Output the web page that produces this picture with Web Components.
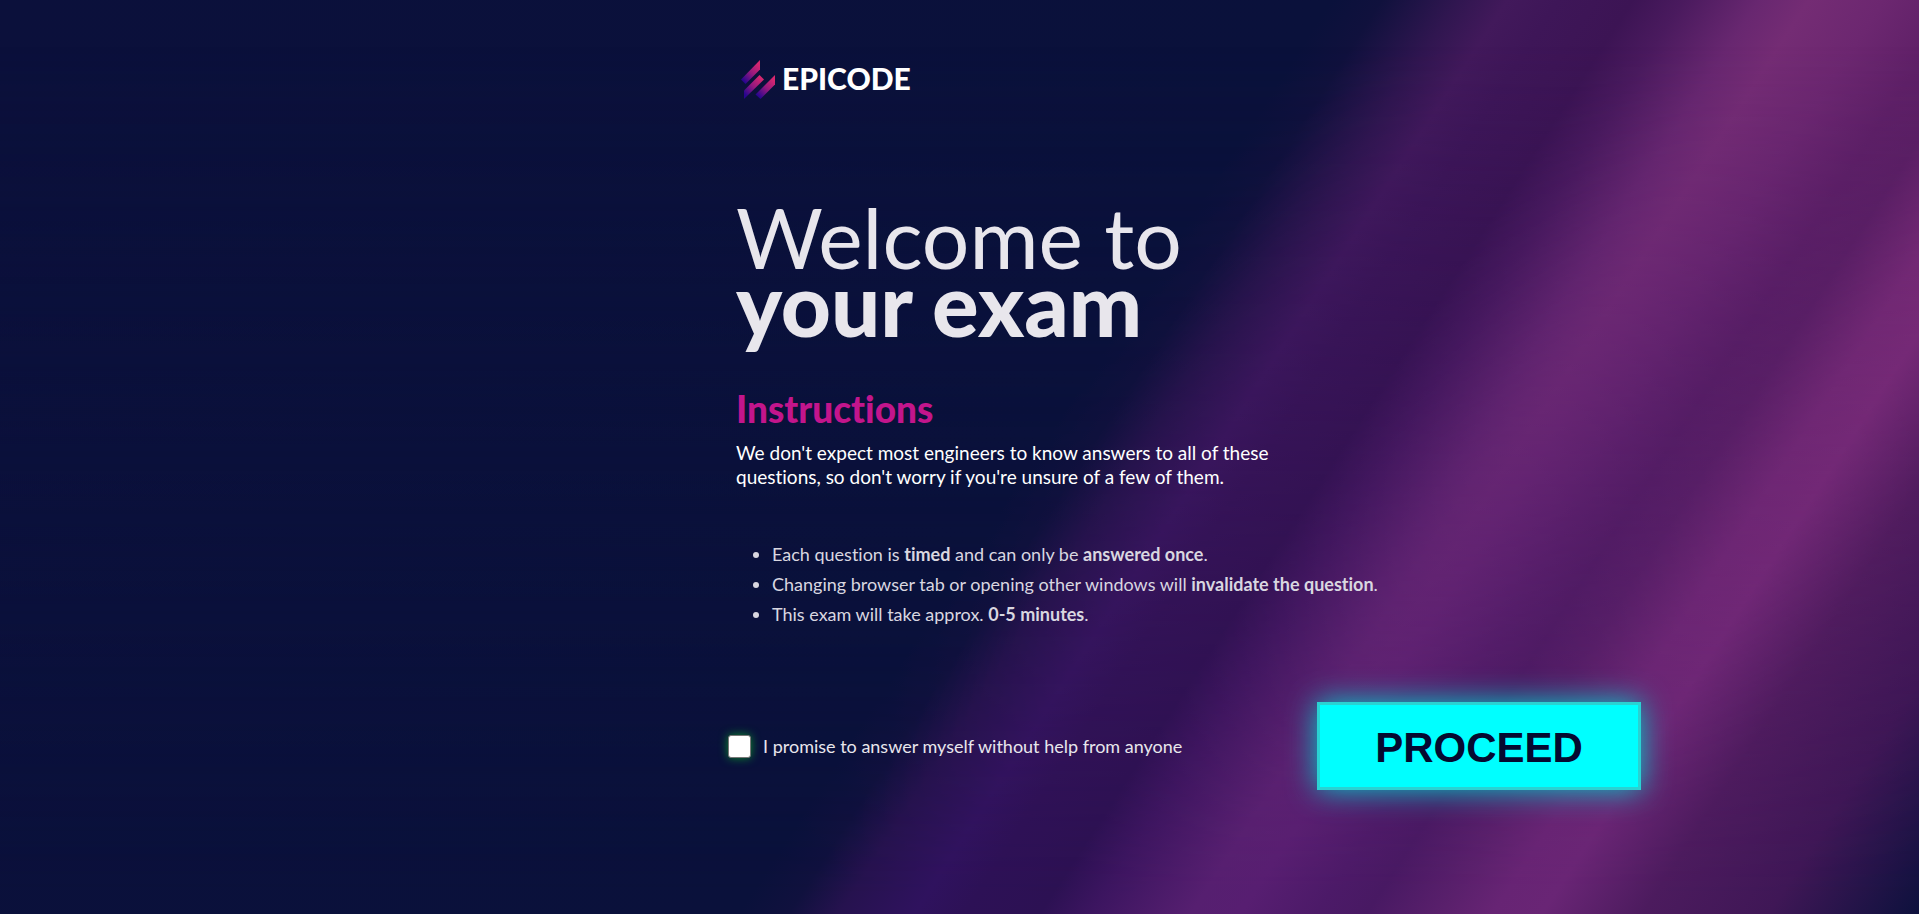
<!DOCTYPE html>
<html lang="en">
<head>
<meta charset="utf-8">
<title>Epicode exam</title>
<style>
  body { margin: 0; background: #0b103b; font-family: Lato, "Liberation Sans", sans-serif; font-variant-ligatures: none; }
</style>
</head>
<body>
<exam-page>
  <brand-logo slot="brand"></brand-logo>
  <exam-title slot="title">Welcome to<strong slot="strong">your exam</strong></exam-title>
  <exam-instructions slot="instructions">
    <span slot="heading">Instructions</span>
    <span slot="intro">We don't expect most engineers to know answers to all of these questions, so don't worry if you're unsure of a few of them.</span>
  </exam-instructions>
  <exam-rules slot="rules"></exam-rules>
  <promise-check slot="actions">I promise to answer myself without help from anyone</promise-check>
  <proceed-button slot="actions">PROCEED</proceed-button>
</exam-page>

<script>
const define = (name, markup) => {
  const template = document.createElement('template');
  template.innerHTML = markup;
  customElements.define(name, class extends HTMLElement {
    constructor() {
      super();
      this.attachShadow({ mode: 'open' }).append(template.content.cloneNode(true));
    }
  });
};

define('exam-page', `
  <style>
    :host {
      display: grid;
      grid-template-columns: 736fr 905fr 278fr;
      min-height: 100vh;
      box-sizing: border-box;
      position: relative;
      isolation: isolate;
      overflow: hidden;
    }
    /* diagonal light beams; the second layer cools them toward the bottom */
    :host::before, :host::after {
      content: "";
      position: absolute;
      inset: 0;
      z-index: -1;
    }
    :host::before {
      background: linear-gradient(123deg,
        #0b103b 0%, #0a113b 53%, #10113d 55%, #301650 58%, #42195b 60%, #3e1658 62%, #3c1454 65%,
        #4a1a5e 67%, #682770 70%, #742c74 72%, #6c2770 75%, #5f2067 78%,
        #5b1f64 80%, #762a74 83%, #7c2c77 85%, #571e60 89%, #3e1656 94%, #0d103d 100%);
    }
    :host::after {
      background: linear-gradient(123deg,
        #0b103b 0%, #0a113b 53%, #10113e 55%, #26124f 57%, #2f125e 60%, #2d1156 62%, #2c1153 65%,
        #3c1560 67%, #561f70 71%, #571e71 73%, #4c1a68 76%, #481963 78%,
        #5a206c 81%, #672474 83%, #692575 85%, #4c1b5e 89%, #3f1756 94%, #0d113d 100%);
      mask-image: linear-gradient(transparent 5%, #000 98%);
    }
    main { grid-column: 2; display: flex; flex-direction: column; align-items: stretch; padding: 60px 0; }
    .title { margin-top: 103px; }
    .instructions { margin-top: 48px; }
    .rules { margin-top: 50px; }
    .actions { display: flex; justify-content: space-between; align-items: center; margin-top: 73px; margin-left: -8px; }
  </style>
  <main>
    <slot name="brand"></slot>
    <div class="title"><slot name="title"></slot></div>
    <div class="instructions"><slot name="instructions"></slot></div>
    <div class="rules"><slot name="rules"></slot></div>
    <div class="actions"><slot name="actions"></slot></div>
  </main>
`);

define('brand-logo', `
  <style>
    :host { display: flex; align-items: center; gap: 6px; height: 40px; padding-left: 4px;
      color: #fff; font-weight: 900; font-size: 30px; line-height: 36px; }
    svg { width: 36px; height: 40px; flex: none; }
    span { align-self: flex-start; }
  </style>
  <svg viewBox="0 0 36 40" aria-hidden="true">
    <defs>
      <linearGradient id="beam" x1="0.85" y1="0.1" x2="0.15" y2="0.9">
        <stop offset="0" stop-color="#d8276f"/>
        <stop offset="0.5" stop-color="#94197f"/>
        <stop offset="1" stop-color="#27058f"/>
      </linearGradient>
    </defs>
    <path fill="url(#beam)" d="M20 0V9.500L5.500 24 1 19.500Z"/>
    <path fill="url(#beam)" d="M19.500 15L24 19.500 4 39V30.500Z"/>
    <path fill="url(#beam)" d="M35 15V24.500L20.500 39 15.500 34.500Z"/>
  </svg>
  <span>EPICODE</span>
`);

define('exam-title', `
  <style>
    h1 { margin: 0; color: #e8e6ec; font-weight: 400; font-size: 84px; line-height: 67px; }
    ::slotted(strong) { display: block; font-weight: 900; font-size: 87px; }
  </style>
  <h1><slot></slot><slot name="strong"></slot></h1>
`);

define('exam-instructions', `
  <style>
    :host { display: block; }
    h2 { margin: 0; color: #c3158c; font-weight: 900; font-size: 37px; line-height: 48px; }
    p { margin: 8px 0 0; max-width: 560px; color: #fff; font-size: 19px; line-height: 24px; }
  </style>
  <h2><slot name="heading"></slot></h2>
  <p><slot name="intro"></slot></p>
`);

define('exam-rules', `
  <style>
    :host { display: block; }
    ul { margin: 0; padding-left: 36px; color: #d9d7e0; font-size: 18px; line-height: 30px; }
    b { font-weight: 700; }
  </style>
  <ul>
    <li>Each question is <b>timed</b> and can only be <b>answered once</b>.</li>
    <li>Changing browser tab or opening other windows will <b>invalidate the question</b>.</li>
    <li>This exam will take approx. <b>0-5 minutes</b>.</li>
  </ul>
`);

define('promise-check', `
  <style>
    :host { display: block; }
    label { display: flex; align-items: center; gap: 12px; color: #e8e6ec; font-size: 18px; line-height: 24px; }
    input { appearance: none; box-sizing: border-box; width: 23px; height: 23px; margin: 0; background: #fff;
      border: 1px solid #767676; border-radius: 3px; box-shadow: 0 0 10px #0c8a2c; }
    input:checked { background: #0ff; }
  </style>
  <label><input type="checkbox"><span><slot></slot></span></label>
`);

define('proceed-button', `
  <style>
    :host { display: block; }
    button { display: block; box-sizing: border-box; min-width: 324px; padding: 19px 55px 15px; border: 3px solid #2ad2d2;
      background: #0ff; color: #050a30; box-shadow: 0 0 30px #0cc;
      font: 700 42px/48px "Liberation Sans", Arial, sans-serif; cursor: pointer; }
  </style>
  <button type="button"><slot></slot></button>
`);
</script>
</body>
</html>
